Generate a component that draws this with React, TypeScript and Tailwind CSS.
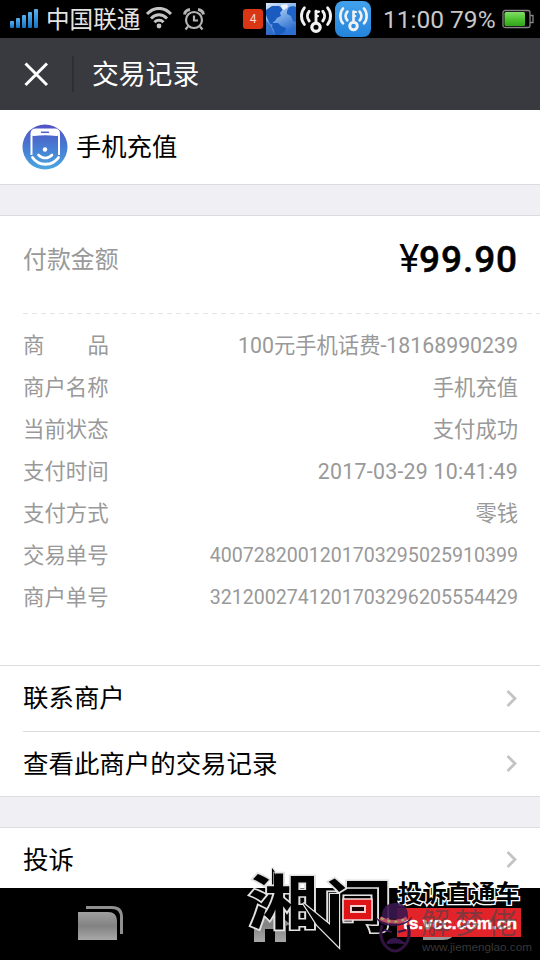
import type { ReactNode } from 'react';

const CJK = "font-['Roboto','Noto_Sans_CJK_SC',sans-serif]";

function StatusBar() {
  return (
    <div className="flex h-[38px] shrink-0 items-center bg-black text-[#e4e4e4]">
      <svg className="ml-[9px] shrink-0" width="30" height="22" viewBox="0 0 30 22">
        <defs>
          <linearGradient id="signal" x1="0" y1="0" x2="0" y2="1">
            <stop offset="0" stopColor="#58b4f0" />
            <stop offset="1" stopColor="#1673c4" />
          </linearGradient>
        </defs>
        <rect x="1" y="13" width="4" height="7" rx="1" fill="url(#signal)" />
        <rect x="7" y="10" width="4" height="10" rx="1" fill="url(#signal)" />
        <rect x="13" y="7" width="4" height="13" rx="1" fill="url(#signal)" />
        <rect x="19" y="4" width="4" height="16" rx="1" fill="url(#signal)" />
        <rect x="25" y="1" width="4" height="19" rx="1" fill="url(#signal)" />
      </svg>
      <span className="ml-[7px] mt-[2px] w-[95px] whitespace-nowrap text-[23.6px] leading-[36px]">中国联通</span>
      <svg className="ml-[4px] shrink-0" width="28" height="24" viewBox="0 0 28 24" fill="none" stroke="#c4c4c4" strokeWidth="3">
        <path d="M2 7C9 -0.500 19 -0.500 26 7M6 11.500C11 6.500 17 6.500 22 11.500M9.500 15.300C12 12.700 16 12.700 18.500 15.300" />
        <circle cx="14" cy="19" r="2.400" fill="#c4c4c4" stroke="none" />
      </svg>
      <svg className="ml-[9px] shrink-0" width="24" height="24" viewBox="0 0 24 24" fill="none" stroke="#b4b4b4" strokeWidth="2.200">
        <circle cx="12" cy="13" r="8" />
        <path d="M12 8.500v5h4M6 19.500l-2.500 3M18 19.500l2.500 3" />
        <path d="M2.500 7.500C3 4.500 5 3 8 2.500M21.500 7.500C21 4.500 19 3 16 2.500" strokeWidth="3" />
      </svg>
      <span className="ml-[37px] flex h-5 w-5 shrink-0 items-center justify-center rounded-[3px] bg-[#d93616] text-[12px] text-[#f4d8d0]">4</span>
      <svg className="ml-[3px] shrink-0" width="30" height="32" viewBox="0 0 30 32">
        <defs>
          <linearGradient id="ocean" x1="0" y1="0" x2="0.500" y2="1">
            <stop offset="0" stopColor="#dbe8f8" />
            <stop offset="0.450" stopColor="#8cb6ec" />
            <stop offset="1" stopColor="#2c6fd0" />
          </linearGradient>
        </defs>
        <rect width="30" height="32" fill="url(#ocean)" />
        <path d="M0 7l6-4 7 0 4 3-3 4 1 3-4 2-2 3-2 1 0 3-3-1-2-4-2-5zM7 20l5 0 3 3 5 2-1 4-6 3h-4l-1-5-2-3z" fill="#1a5bc0" />
        <path d="M21 8l2-4 4-1 3 1v15l-3-1-2-5-4-2z" fill="#1f63c8" />
        <path d="M15 2l6-1 1 3-4 3-2-1z" fill="#f0f5fd" />
        <path d="M0 17l5 6 3 9H0z" fill="#245fbd" fillOpacity="0.700" />
      </svg>
      <HotspotIcon className="ml-[4px]" />
      <span className="ml-[3px] flex h-9 w-9 shrink-0 items-center justify-center rounded-[8px] bg-gradient-to-b from-[#43a2ec] to-[#2384dc]">
        <HotspotIcon small />
      </span>
      <span className="ml-[12px] mt-[2px] w-[112px] whitespace-nowrap text-[24.500px] text-[#c8c8c8]">11:00 79%</span>
      <svg className="ml-[7px] shrink-0" width="33" height="20" viewBox="0 0 33 20">
        <defs>
          <linearGradient id="charge" x1="0" y1="0" x2="0" y2="1">
            <stop offset="0" stopColor="#82de68" />
            <stop offset="0.500" stopColor="#4fc332" />
            <stop offset="1" stopColor="#32a31c" />
          </linearGradient>
        </defs>
        <rect x="1" y="1.500" width="27" height="17" rx="2" fill="none" stroke="#858585" strokeWidth="1.300" />
        <path d="M28 6.500h3v7h-3" fill="none" stroke="#858585" strokeWidth="1.300" />
        <rect x="2.500" y="3" width="20.500" height="14" rx="1.500" fill="url(#charge)" />
      </svg>
    </div>
  );
}

function HotspotIcon({ className = '', small = false }: { className?: string; small?: boolean }) {
  return (
    <svg
      className={`shrink-0 ${className}`}
      width={small ? 29 : 32}
      height={small ? 28 : 31}
      viewBox="0 0 33 32"
      fill="none"
      stroke="#f2f2f2"
      strokeWidth="3"
      strokeLinecap="round"
    >
      <circle cx="16.500" cy="24" r="4.300" strokeWidth="3.400" />
      <path d="M16.500 19.500V7.500" />
      <path d="M17 8h2.500M17 12.500h1.500" strokeWidth="2.400" />
      <path d="M9.500 7.500c-2.500 3-2.500 7 0 10M4.500 4c-4 4.500-4 12.500 0 17" />
      <path d="M23.500 7.500c2.500 3 2.500 7 0 10M28.500 4c4 4.500 4 12.500 0 17" />
    </svg>
  );
}

function PhoneBadge() {
  return (
    <svg className="shrink-0" width="46" height="46" viewBox="0 0 46 46" fill="none">
      <defs>
        <linearGradient id="badge" x1="0" y1="0" x2="0" y2="1">
          <stop offset="0" stopColor="#5350c4" />
          <stop offset="0.500" stopColor="#477bd2" />
          <stop offset="1" stopColor="#4ca6df" />
        </linearGradient>
      </defs>
      <circle cx="23" cy="23" r="22.500" fill="url(#badge)" />
      <path d="M9.500 31V10Q9.500 5.500 14 5.500h18.500Q37 5.500 37 10V31" stroke="#fff" strokeWidth="2" />
      <path d="M9 11.500V9.500Q9 5 13.500 5h19.500q4.500 0 4.500 4.500v2L34.500 12q-11-1.500-22.500 0z" fill="#fff" />
      <path d="M19 8.300h8" stroke="#4b62c9" strokeWidth="1.500" />
      <circle cx="23" cy="25.500" r="2.200" fill="#fff" />
      <path d="M16.500 31c4 4 9.500 4 13.500 0" stroke="#fff" strokeWidth="2.600" strokeLinecap="round" />
      <path d="M10.500 33.500c6 9 20 9 26 0" stroke="#fff" strokeWidth="2.800" strokeLinecap="round" />
    </svg>
  );
}

function DetailRow({ label, children }: { label: ReactNode; children: ReactNode }) {
  return (
    <div className="flex h-[42px] items-center justify-between pl-[23px] pr-[22px] text-[21.300px] text-[#999]">
      <span className="flex w-[86px] justify-between whitespace-nowrap text-[21.400px]">{label}</span>
      {children}
    </div>
  );
}

function LinkRow({ children, className = '' }: { children: ReactNode; className?: string }) {
  return (
    <div className={`flex items-center justify-between pr-[22px] text-[25.450px] text-black ${className}`}>
      <span>{children}</span>
      <svg width="12" height="18" viewBox="0 0 12 18" fill="none" stroke="#c4c4c6" strokeWidth="2.800">
        <path d="M1.500 1L9 8.500 1.500 16" />
      </svg>
    </div>
  );
}

function NavBar() {
  return (
    <div className="flex h-[72px] shrink-0 bg-black">
      <svg width="540" height="72" viewBox="0 0 540 72">
        <defs>
          <linearGradient id="key" x1="0" y1="0" x2="0" y2="1">
            <stop offset="0" stopColor="#a0a0a0" />
            <stop offset="0.500" stopColor="#828282" />
            <stop offset="1" stopColor="#a8a8a8" />
          </linearGradient>
        </defs>
        <path d="M78 24h30q9 0 9 9v19H78z" fill="url(#key)" />
        <path d="M86 19.500h26q9.500 0 9.500 9.500v17" fill="none" stroke="#909090" strokeWidth="3" />
        <path d="M250 36l20-16 20 16-4 2v16h-11V41h-10v13h-11V38z" fill="url(#key)" />
        <path d="M423 48h20q9 0 14-6-4 10-14 10h-20zM427 14l10-8v8z" fill="#9a9a9a" />
      </svg>
    </div>
  );
}

function Watermark() {
  return (
    <svg className="pointer-events-none absolute left-[240px] top-[840px]" width="300" height="120" viewBox="240 840 300 120">
      <g stroke="#e2e2e2" strokeWidth="3" strokeLinejoin="miter" strokeMiterlimit="3" fill="#000" className="[paint-order:stroke]">
        <path d="M272 868l9 12v10h-9z" strokeWidth="2.400" />
        <text transform="translate(248 924) scale(1.28 1.08)" fontSize="55" fontWeight="700" className="font-['Noto_Sans_CJK_SC',sans-serif]">湘</text>
        <text transform="translate(323 927) scale(1.24 1.02)" fontSize="56" fontWeight="700" className="font-['Noto_Sans_CJK_SC',sans-serif]">问</text>
        <path d="M303 903l27 22V894h9v53l-22-22z" strokeWidth="2.400" />
        <path d="M274 872l5 8v12h-5z" stroke="none" />
      </g>
      <rect x="343" y="899" width="29" height="21" fill="#df1417" stroke="#f2dddd" strokeWidth="1.500" />
      <rect x="351" y="906" width="14" height="6" fill="#1c0605" stroke="#f2cfcf" strokeWidth="2" />
      <rect x="397" y="908" width="124" height="29" fill="#e3232a" />
      <text x="403" y="929" textLength="114" lengthAdjust="spacingAndGlyphs" fontSize="16" fontWeight="700" fill="#fff" stroke="#fff" strokeWidth="0.500" className="font-['Liberation_Sans',sans-serif]">ts.vcc.com.cn</text>
      <text x="398" y="902" textLength="122" lengthAdjust="spacingAndGlyphs" fontSize="24" fontWeight="700" fill="#000" stroke="#fff" strokeWidth="2.600" className="font-['Noto_Sans_CJK_SC',sans-serif] [paint-order:stroke]">投诉直通车</text>
      <text x="421" y="934" textLength="96" fontSize="29" fill="#464449" fillOpacity="0.620" className="font-['Noto_Sans_CJK_SC',sans-serif]">解梦佬</text>
      <text x="422" y="951" textLength="110" lengthAdjust="spacingAndGlyphs" fontSize="11" fill="#383838" className="font-['Liberation_Sans',sans-serif]">www.jiemenglao.com</text>
      <g>
        <path d="M382 918q-1-15 14-15 13 0 12 17z" fill="#3b174f" fillOpacity="0.900" />
        <path d="M376 917c8 9 30 10 36-1-1 12-33 14-36 1z" fill="#391650" />
        <path d="M380 918c8 5 21 5 27 0" fill="none" stroke="#b84e68" strokeWidth="4" />
        <path d="M381 918c8 5 19 5 25 0" fill="none" stroke="#aaae60" strokeWidth="2" strokeDasharray="3 4" />
        <path d="M382 925q-3 12 2 19 11 14 22 0 5-7 2-19" fill="none" stroke="#30143f" strokeWidth="3" />
        <path d="M384 930l8 2M398 932l8-2M387 943q6-8 17 0-9-1-17 0" fill="#35164b" stroke="#35164b" strokeWidth="2" />
      </g>
    </svg>
  );
}

export default function App() {
  return (
    <div className={`relative flex h-[960px] w-[540px] flex-col overflow-hidden bg-white ${CJK}`}>
      <StatusBar />
      <header className="flex h-[72px] shrink-0 items-center bg-[#393a3f] text-white">
        <svg className="ml-6 shrink-0" width="25" height="25" viewBox="0 0 25 25" stroke="#fff" strokeWidth="3">
          <path d="M1.500 1.500l21.500 21.500M23 1.500l-21.500 21.500" />
        </svg>
        <span className="ml-[23px] h-9 w-[2px] bg-[#2e2f33]" />
        <h1 className="ml-[18px] mt-[2px] text-[26.800px] leading-[40px]">交易记录</h1>
      </header>
      <section className="flex h-[75px] shrink-0 items-center border-b border-[#dcdce0] pl-[22px]">
        <PhoneBadge />
        <span className="ml-[8px] mt-[1px] text-[25.300px] text-black">手机充值</span>
      </section>
      <div className="h-[30px] shrink-0 bg-[#efeff4]" />
      <section className="h-[450px] shrink-0 border-t border-[#dcdce0]">
        <div className="flex h-[97px] items-center justify-between pb-[8px] pl-[23px] pr-[22px]">
          <span className="mt-[1px] text-[23.900px] text-[#999]">付款金额</span>
          <span className="-mt-[3px] flex items-center text-black">
            <span className="text-[38px] font-normal leading-none">¥</span>
            <span className="text-[37px] font-medium leading-none tracking-[0.900px] [-webkit-text-stroke:0.500px_#000]">99.90</span>
          </span>
        </div>
        <div className="ml-[23px] h-px bg-[repeating-linear-gradient(90deg,#e4e4e4_0_5px,transparent_5px_9px)]" />
        <div className="pt-[11px]">
          <DetailRow label={<><span>商</span><span>品</span></>}><span>100元手机话费-18168990239</span></DetailRow>
          <DetailRow label="商户名称"><span>手机充值</span></DetailRow>
          <DetailRow label="当前状态"><span>支付成功</span></DetailRow>
          <DetailRow label="支付时间"><span className="tracking-[0.280px]">2017-03-29 10:41:49</span></DetailRow>
          <DetailRow label="支付方式"><span>零钱</span></DetailRow>
          <DetailRow label="交易单号"><span className="text-[19.600px]">4007282001201703295025910399</span></DetailRow>
          <DetailRow label="商户单号"><span className="text-[19.600px]">3212002741201703296205554429</span></DetailRow>
        </div>
      </section>
      <section className="shrink-0 border-y border-[#dcdce0]">
        <LinkRow className="ml-[23px] h-[66px] border-b border-[#dcdce0]">联系商户</LinkRow>
        <LinkRow className="ml-[23px] h-[64px]">查看此商户的交易记录</LinkRow>
      </section>
      <div className="h-[30px] shrink-0 bg-[#efeff4]" />
      <section className="h-[61px] shrink-0 border-t border-[#dcdce0]">
        <LinkRow className="ml-[23px] h-[64px]">投诉</LinkRow>
      </section>
      <NavBar />
      <Watermark />
    </div>
  );
}
